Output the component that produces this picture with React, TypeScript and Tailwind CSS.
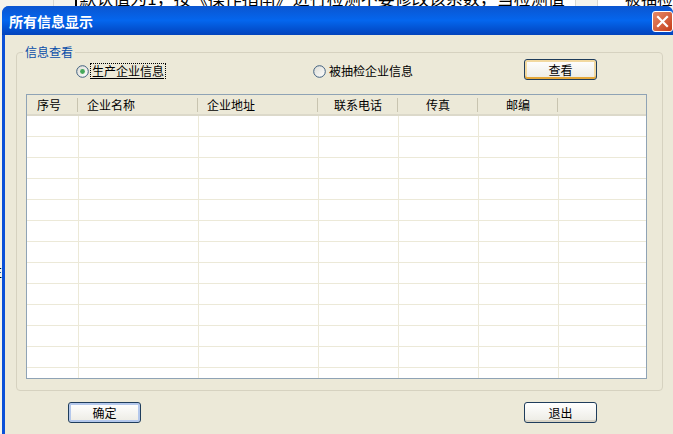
import React from 'react';

const font = { fontFamily: '"Noto Sans CJK SC", "Liberation Sans", sans-serif' };

const columns = [
  { label: '序号', width: 'w-[52px]', align: 'pl-[10px] text-left' },
  { label: '企业名称', width: 'w-[120px]', align: 'pl-[8px] text-left' },
  { label: '企业地址', width: 'w-[120px]', align: 'pl-[8px] text-left' },
  { label: '联系电话', width: 'w-[80px]', align: 'text-center' },
  { label: '传真', width: 'w-[80px]', align: 'text-center' },
  { label: '邮编', width: 'w-[80px]', align: 'text-center' },
];

function XpButton({ label, tone }: { label: string; tone: 'blue' | 'gold' | 'plain' }) {
  const ring =
    tone === 'blue'
      ? 'shadow-[inset_0_0_0_2px_#b4c8ec]'
      : tone === 'gold'
        ? 'shadow-[inset_0_-2px_0_#e5a83a,inset_0_0_0_2px_#f2d9a0]'
        : 'shadow-[inset_0_-2px_0_#d8d4c6]';
  return (
    <div
      className={`flex h-[21px] w-[73px] items-center justify-center rounded-[3px] border border-[#1f3d5c] bg-gradient-to-b from-white to-[#ecebe4] text-[12px] leading-none text-black ${ring}`}
    >
      {label}
    </div>
  );
}

function Radio({ checked }: { checked?: boolean }) {
  return (
    <svg width="13" height="13" viewBox="0 0 13 13" className="shrink-0">
      <defs>
        <linearGradient id={checked ? 'r1' : 'r2'} x1="0" y1="0" x2="1" y2="1">
          <stop offset="0" stopColor="#dcdcd4" />
          <stop offset="1" stopColor="#ffffff" />
        </linearGradient>
      </defs>
      <circle cx="6.5" cy="6.5" r="5.8" fill={`url(#${checked ? 'r1' : 'r2'})`} stroke="#3f5f7f" strokeWidth="1" />
      {checked && <circle cx="6.5" cy="6.5" r="2.4" fill="#45a85a" />}
    </svg>
  );
}

export default function App() {
  return (
    <div className="h-[434px] w-[673px] overflow-hidden bg-[#f4f3ec]" style={font}>
      {/* page behind the dialog */}
      <div className="flex h-[6px] overflow-hidden bg-white">
        <div className="h-full w-[62px] border-r border-[#d8d8d0] bg-[#f4f3ec]" />
        <div className="h-full w-[27px] border-r-2 border-black bg-[#f4f3ec]" />
        <div className="-mt-[10px] w-[498px] shrink-0 overflow-hidden whitespace-nowrap pl-[2px] text-[17px] leading-[16px] text-black">
          默认值为1，按《操作指南》进行检测不要修改该系数，当检测值
        </div>
        <div className="h-full w-[26px] border-x border-[#d8d8d0] bg-[#f4f3ec]" />
        <div className="-mt-[10px] shrink-0 pl-[27px] text-[16px] leading-[16px] text-black">被抽检</div>
      </div>

      <div className="flex h-[428px]">
        <div className="w-[2px] shrink-0 overflow-hidden pt-[258px]">
          <span className="-ml-[12px] block w-[14px] text-[14px] leading-none text-black">往</span>
        </div>

        {/* dialog */}
        <div className="flex h-[428px] w-[671px] flex-col overflow-hidden rounded-t-[7px] bg-[#0a50d8]">
          <div className="flex h-[29px] shrink-0 items-center justify-between bg-gradient-to-b from-[#0a55d0] via-[#0466ee] to-[#0343bc] pl-[7px] pr-[0px]">
            <span className="text-[14px] font-bold leading-none text-white">所有信息显示</span>
            <div className="mt-[2px] flex h-[21px] w-[21px] items-center justify-center rounded-[3px] border border-white bg-gradient-to-br from-[#e58a68] to-[#c43a14]">
              <svg width="15" height="15" viewBox="0 0 15 15">
                <path d="M3 3 L12 12 M12 3 L3 12" stroke="white" strokeWidth="2.2" strokeLinecap="square" />
              </svg>
            </div>
          </div>

          <div className="ml-[3px] flex min-h-0 flex-1 flex-col bg-[#ece9d8] pl-[11px] pr-[10px] pt-[17px]">
            {/* group box */}
            <div className="relative h-[339px] w-[647px] rounded-[4px] border border-[#d6d2c0] px-[9px] pt-[41px]">
              <span className="absolute -top-[9px] left-[6px] bg-[#ece9d8] px-[2px] text-[12px] leading-[16px] text-[#0a4ea8]">
                信息查看
              </span>

              <div className="absolute left-[59px] top-[10px] flex items-center gap-[1px] text-[12px] leading-none text-black">
                <Radio checked />
                <span className="border border-dotted border-black px-[1px] py-px underline underline-offset-2">生产企业信息</span>
              </div>
              <div className="absolute left-[296px] top-[10px] flex items-center gap-[3px] py-px text-[12px] leading-none text-black">
                <Radio />
                <span className="py-px">被抽检企业信息</span>
              </div>
              <div className="absolute left-[507px] top-[6px]">
                <XpButton label="查看" tone="gold" />
              </div>

              {/* table */}
              <div className="flex h-[285px] w-[621px] flex-col overflow-hidden border border-[#8fa3b5] bg-white">
                <div className="flex h-[21px] shrink-0 border-b-[2px] border-[#dcd9ca] bg-[#ece9d8] pt-[1px] text-[12px] leading-none text-black">
                  {columns.map(c => (
                    <div key={c.label} className={`${c.width} flex shrink-0 items-center`}>
                      <span className={`flex-1 ${c.align}`}>{c.label}</span>
                      <span className="mr-[1px] h-[14px] w-[1px] bg-[#c8c4b0]" />
                    </div>
                  ))}
                </div>
                <div className="flex min-h-0 flex-1 flex-col">
                  {Array.from({ length: 13 }).map((_, i) => (
                    <div key={i} className="flex h-[21px] shrink-0 border-b border-[#ece9d8]">
                      {columns.map(c => (
                        <div key={c.label} className={`${c.width} shrink-0 border-r border-[#ece9d8]`} />
                      ))}
                    </div>
                  ))}
                </div>
              </div>
            </div>

            <div className="flex justify-between pl-[52px] pr-[66px] pt-[11px]">
              <XpButton label="确定" tone="blue" />
              <XpButton label="退出" tone="plain" />
            </div>
          </div>
        </div>
      </div>
    </div>
  );
}
